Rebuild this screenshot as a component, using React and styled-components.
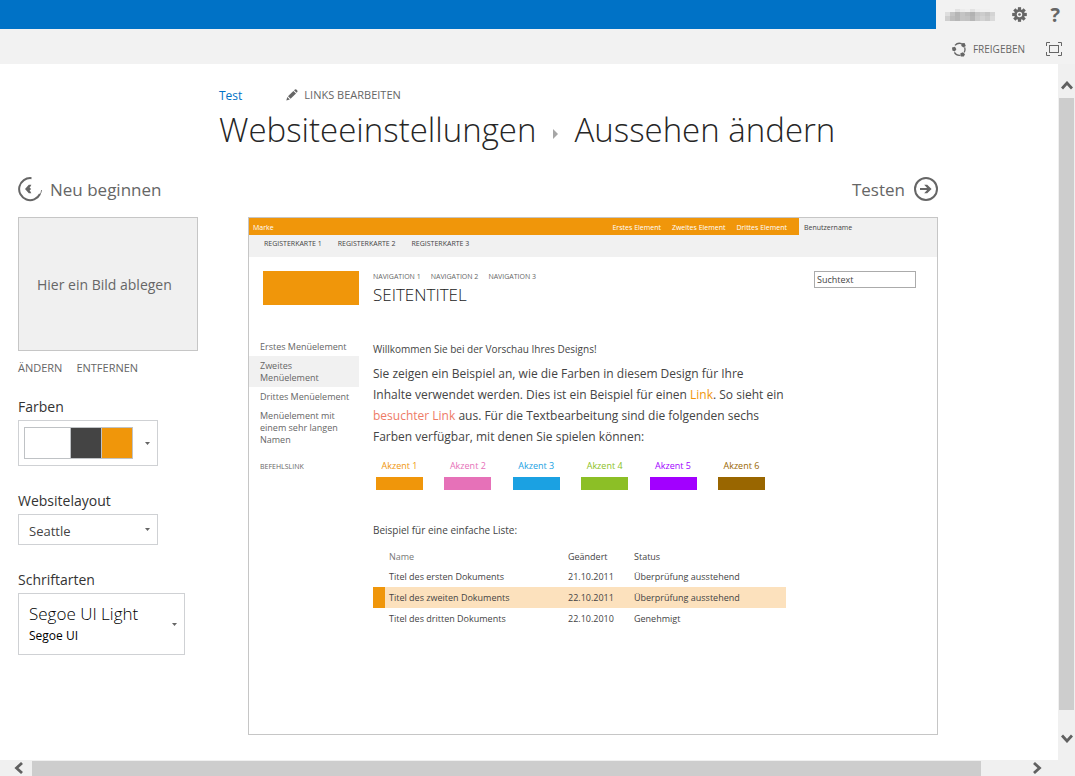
import React from "react";
import styled, { createGlobalStyle, css } from "styled-components";

const ORANGE = "#f0960a";
const GREY = "#666666";
const DARK = "#444444";
const LINE = "#c6c6c6";

const Global = createGlobalStyle`
  *, *::before, *::after { box-sizing: border-box; }
  body {
    margin: 0;
    background: #fff;
    color: ${DARK};
    font-family: "Open Sans", "Noto Sans", sans-serif;
    font-size: 12px;
  }
  button, input, select {
    font-family: inherit;
    color: inherit;
    margin: 0;
  }
  a { color: inherit; text-decoration: none; }
  h1, h2, p, ul { margin: 0; padding: 0; font-weight: 400; }
  ul { list-style: none; }
  svg { display: block; flex: none; }
`;

const Shell = styled.div`
  min-height: 100vh;
  display: flex;
  flex-direction: column;
`;

const SuiteBar = styled.header`
  display: flex;
  height: 29px;
  background: #0072c6;
`;

const SuiteTools = styled.div`
  margin-left: auto;
  width: 139px;
  background: #f2f2f2;
  display: flex;
  align-items: center;
  gap: 17px;
  padding: 0 15px 0 9px;

  > :last-child { margin-left: auto; }
`;

const PlainButton = styled.button`
  display: flex;
  align-items: center;
  gap: ${(p) => p.$gap || 0}px;
  padding: 0;
  border: 0;
  background: none;
  color: ${GREY};
  font-size: ${(p) => p.$size || 11}px;
  font-weight: ${(p) => p.$weight || 400};
  line-height: ${(p) => p.$line || 18}px;
  cursor: pointer;
`;

const Ribbon = styled.div`
  height: 35px;
  background: #f2f2f2;
  display: flex;
  justify-content: flex-end;
  align-items: center;
  gap: 21px;
  padding: 5px 13px 0 0;
`;

const Viewport = styled.div`
  flex: 1;
  display: flex;
`;

const Page = styled.main`
  flex: 1;
  min-width: 0;
  padding: 0 120px 25px 18px;
`;

const PageHead = styled.div`
  padding: 20px 0 0 201px;
  height: 113px;
`;

const TopLinks = styled.nav`
  display: flex;
  align-items: center;
  gap: 44px;
  height: 22px;
`;

const SiteLink = styled.a`
  color: #0072c6;
  font-size: 12px;
`;

const Title = styled.h1`
  display: flex;
  align-items: center;
  font-size: 33px;
  line-height: 48px;
  font-weight: 300;
  color: #262626;
  white-space: nowrap;
`;

const TitleArrow = styled.svg`
  margin: 8px 16px 0 17px;
`;

const Steps = styled.div`
  display: flex;
  justify-content: space-between;
  height: 40px;
`;

const Columns = styled.div`
  display: flex;
  gap: 50px;
  align-items: flex-start;
`;

const Options = styled.aside`
  width: 180px;
  flex: none;
`;

const DropZone = styled.div`
  height: 134px;
  border: 1px solid ${LINE};
  background: #f0f0f0;
  color: ${GREY};
  display: flex;
  align-items: center;
  padding-left: 18px;
  font-size: 14px;
`;

const DropActions = styled.div`
  display: flex;
  gap: 14px;
  margin: 8px 0 20px;
`;

const Field = styled.div`
  margin-bottom: 25px;
`;

const FieldLabel = styled.label`
  display: block;
  font-size: 14px;
  line-height: 20px;
  margin-bottom: 3px;
  color: #333;
`;

const pickerBox = css`
  width: ${(p) => p.$width}px;
  height: ${(p) => p.$height}px;
  border: 1px solid #cfd1d4;
  background: #fff;
`;

const Picker = styled.button`
  ${pickerBox}
  display: flex;
  align-items: center;
  justify-content: space-between;
  padding: 0 7px 0 ${(p) => p.$left}px;
  text-align: left;
`;

const SelectWrap = styled.div`
  display: grid;
  width: 140px;
  align-items: center;

  > * { grid-area: 1 / 1; }
  > svg { justify-self: end; margin-right: 8px; pointer-events: none; }
`;

const Select = styled.select`
  ${pickerBox}
  appearance: none;
  padding: 2px 20px 0 10px;
  font-size: 13px;
  color: ${DARK};
`;

const Swatches = styled.span`
  display: flex;
  gap: 1px;
  border: 1px solid #bfc2c5;
  background: #bfc2c5;
`;

const Swatch = styled.span`
  width: ${(p) => p.$width}px;
  height: 30px;
  background: ${(p) => p.$color};
`;

const FontSample = styled.span`
  display: block;
  color: #000;
  font-size: ${(p) => p.$size}px;
  font-weight: ${(p) => p.$weight};
  line-height: ${(p) => p.$line}px;
`;

const Preview = styled.section`
  flex: 1;
  min-width: 0;
  min-height: 518px;
  border: 1px solid ${LINE};
  font-size: 9px;
`;

const PvBrandBar = styled.div`
  display: flex;
  height: 17px;
  line-height: 19px;
  font-size: 7px;
  background: #f1f1f1;
`;

const PvBrand = styled.div`
  flex: 1;
  display: flex;
  gap: 11px;
  padding: 0 12px 0 4px;
  background: ${ORANGE};
  color: #fff;

  > :first-child { margin-right: auto; }
`;

const PvUser = styled.div`
  width: 138px;
  padding-left: 5px;
`;

const PvTabs = styled.div`
  display: flex;
  gap: 16px;
  height: 22px;
  padding-left: 15px;
  line-height: 18px;
  font-size: 7px;
  background: #f1f1f1;
`;

const PvHead = styled.div`
  display: flex;
  padding: 14px 21px 0 14px;
  height: 80px;
`;

const PvLogo = styled.div`
  width: 96px;
  height: 34px;
  margin-right: 14px;
  background: ${ORANGE};
`;

const PvNav = styled.nav`
  display: flex;
  gap: 10px;
  font-size: 7px;
  line-height: 12px;
  color: ${GREY};
`;

const PvTitle = styled.h2`
  font-size: 17px;
  font-weight: 300;
  line-height: 24px;
  color: #222;
`;

const PvSearch = styled.input`
  margin-left: auto;
  width: 102px;
  height: 17px;
  padding: 0 2px;
  border: 1px solid #ababab;
  font-size: 9px;
  color: ${DARK};
`;

const PvBody = styled.div`
  display: flex;
  gap: 14px;
`;

const PvSide = styled.ul`
  width: 110px;
  flex: none;
`;

const PvSideItem = styled.li`
  padding: 4px 8px 3px 11px;
  line-height: 12px;
  color: ${GREY};
  background: ${(p) => (p.$active ? "#f1f1f1" : "transparent")};
`;

const PvCommand = styled(PvSideItem)`
  margin-top: 8px;
  font-size: 7px;
`;

const PvContent = styled.div`
  width: 413px;
  padding-top: 3px;
`;

const PvText = styled.p`
  font-size: ${(p) => p.$size || 10}px;
  line-height: ${(p) => p.$line || 18}px;
`;

const PvSample = styled(PvText)`
  margin-top: 5px;
`;

const PvLink = styled.a`
  color: ${(p) => (p.$visited ? "#ee7b66" : ORANGE)};
`;

const Accents = styled.ul`
  display: flex;
  justify-content: space-between;
  padding: 11px 21px 31px 3px;
`;

const Accent = styled.li`
  width: 47px;
  text-align: center;
  line-height: 16px;
  color: ${(p) => p.$color};

  &::after {
    content: "";
    display: block;
    height: 13px;
    margin-top: 3px;
    background: ${(p) => p.$color};
  }
`;

const Docs = styled.table`
  width: 100%;
  margin-top: 8px;
  border-collapse: collapse;
  table-layout: fixed;
  font-size: 9px;

  th, td {
    height: 21px;
    padding: 0;
    text-align: left;
    font-weight: 400;
    line-height: 12px;
  }
  th { height: 19px; }
  th:nth-child(1) { width: 12px; }
  th:nth-child(2) { width: 183px; color: #777; }
  th:nth-child(3) { width: 66px; }
  th:nth-child(2), td:nth-child(2) { padding-left: 4px; }
`;

const DocRow = styled.tr`
  background: ${(p) => (p.$active ? "#fce1bd" : "transparent")};

  td:first-child { background: ${(p) => (p.$active ? ORANGE : "transparent")}; }
`;

const VTrack = styled.div`
  width: 17px;
  display: flex;
  flex-direction: column;
  align-items: center;
  justify-content: space-between;
  padding: 17px 0;
  background: #f0f0f0;
`;

const VThumb = styled.div`
  flex: 1;
  width: 15px;
  margin: 8px 0 24px;
  background: #cdcdcd;
`;

const HTrack = styled.div`
  display: flex;
  align-items: center;
  height: 16px;
  padding: 0 33px 0 14px;
  background: #f0f0f0;
`;

const HThumb = styled.div`
  flex: 1;
  height: 15px;
  margin: 1px 51px 0 8px;
  background: #cdcdcd;
`;

const Gear = () => (
  <svg width="15" height="15" viewBox="-8 -8 16 16" fill={GREY}>
    {[0, 45, 90, 135].map((a) => (
      <rect key={a} x="-1.7" y="-7.8" width="3.4" height="15.6" transform={`rotate(${a})`} />
    ))}
    <circle r="5.6" />
    <circle r="2.9" fill="#f2f2f2" />
    <circle r="1.4" />
  </svg>
);

const MASK_ROWS = [
  ["#f2f2f2", "#f2f2f2", "#e2e2e2", "#ececec", "#efefef", "#e2e2e2", "#eeeeee", "#f0f0f0", "#f0f0f0", "#f2f2f2"],
  ["#dedede", "#c4c4c4", "#b5b5b5", "#c4c4c4", "#bcbcbc", "#b2b2b2", "#c6c6c6", "#cccccc", "#c4c4c4", "#d4d4d4"],
  ["#cfcfcf", "#bdbdbd", "#b6b6b6", "#c4c4c4", "#c2c2c2", "#b6b6b6", "#cacaca", "#d2d2d2", "#cacaca", "#dadada"],
];
const MASK_TOPS = [0, 3, 7];

const MaskedName = () => (
  <svg width="50" height="12" viewBox="0 0 50 12" role="img" aria-label="Benutzer" shapeRendering="crispEdges">
    {MASK_ROWS.map((row, r) =>
      row.map((c, i) => <rect key={`${r}-${i}`} x={i * 5} y={MASK_TOPS[r]} width="5" height={r ? 5 - (r === 1) : 3} fill={c} />)
    )}
  </svg>
);

const ShareIcon = () => (
  <svg width="15" height="15" viewBox="0 0 15 15" fill="none" stroke={GREY} strokeWidth="1.3">
    <path d="M3 3.4A6 6 0 0 1 9.6 1.7M12.6 5.4A6 6 0 0 1 12.2 10.4M8.6 13.2A6 6 0 0 1 2.4 10.4" />
    <g fill={GREY} stroke="none">
      <path d="M0 5.6L3 4.8L4.4 7.2L2.8 9.4L0.4 8.6Z" />
      <path d="M9.2 1.2L12.6 1L13.8 4L11.4 5.4L9.4 4Z" />
      <path d="M8.4 11.2L11 10.2L13 12.2L11.8 14.6L8.8 14.4Z" />
    </g>
  </svg>
);

const FocusIcon = () => (
  <svg width="16" height="14" viewBox="0 0 16 14" fill="none" stroke={GREY}>
    <path d="M0.5 4V0.5H4M12 0.5H15.5V4M15.5 10V13.5H12M4 13.5H0.5V10" />
    <rect x="3.5" y="3.5" width="9" height="7" />
  </svg>
);

const Pencil = () => (
  <svg width="12" height="12" viewBox="0 0 12 12" fill={GREY}>
    <path d="M0.3 11.5L1.3 8L3.8 10.5Z" />
    <path d="M2 7.2L7.4 1.9L10 4.5L4.6 9.8Z" />
    <path d="M8 1.3L9 0.4Q9.7 0 10.3 0.6L11.3 1.6Q11.8 2.3 11.3 3L10.5 3.8Z" />
  </svg>
);

const BackIcon = () => (
  <svg width="25" height="25" viewBox="0 0 25 25" fill="none" stroke={GREY}>
    <path d="M13.5 1.2A11 11 0 1 0 22 17" strokeWidth="2" />
    <path d="M22 17.4Q23.4 15.4 23.6 13" strokeWidth="0.8" />
    <path d="M13.4 7.8L11 12L13.4 16.2H10.8L7 12L10.8 7.8Z" fill={GREY} stroke="none" />
    <path d="M8 12H12.6" strokeWidth="2" />
  </svg>
);

const ForwardIcon = () => (
  <svg width="24" height="25" viewBox="0 0 24 25" fill="none" stroke={GREY} strokeWidth="2">
    <circle cx="12" cy="12" r="11" />
    <path d="M6 12H16" />
    <path d="M10.2 7.8H13.2L17.6 12L13.2 16.2H10.2L14 12Z" fill={GREY} stroke="none" />
  </svg>
);

const Caret = () => (
  <svg width="5" height="3" viewBox="0 0 5 3" fill={GREY}>
    <path d="M0 0H5L2.5 3Z" />
  </svg>
);

const CHEVRONS = {
  up: ["0 0 12 9", "M1 7.5L6 2L11 7.5"],
  down: ["0 0 12 9", "M1 1.5L6 7L11 1.5"],
  left: ["0 0 10 12", "M8 1L2.5 6L8 11"],
  right: ["0 0 10 12", "M2 1L7.5 6L2 11"],
};

const Chevron = ({ dir }) => {
  const [box, d] = CHEVRONS[dir];
  const [, , w, h] = box.split(" ");
  return (
    <svg width={w} height={h} viewBox={box} fill="none" stroke="#606060" strokeWidth="2.8">
      <path d={d} />
    </svg>
  );
};

const ACCENTS = [ORANGE, "#e671b8", "#1ba1e2", "#8cbf26", "#a200ff", "#996600"];

const DOCS = [
  ["Titel des ersten Dokuments", "21.10.2011", "Überprüfung ausstehend"],
  ["Titel des zweiten Dokuments", "22.10.2011", "Überprüfung ausstehend"],
  ["Titel des dritten Dokuments", "22.10.2010", "Genehmigt"],
];

const DesignPreview = () => (
  <Preview>
    <PvBrandBar>
      <PvBrand>
        <span>Marke</span>
        <span>Erstes Element</span>
        <span>Zweites Element</span>
        <span>Drittes Element</span>
      </PvBrand>
      <PvUser>Benutzername</PvUser>
    </PvBrandBar>
    <PvTabs>
      <span>REGISTERKARTE 1</span>
      <span>REGISTERKARTE 2</span>
      <span>REGISTERKARTE 3</span>
    </PvTabs>
    <PvHead>
      <PvLogo />
      <div>
        <PvNav>
          <span>NAVIGATION 1</span>
          <span>NAVIGATION 2</span>
          <span>NAVIGATION 3</span>
        </PvNav>
        <PvTitle>SEITENTITEL</PvTitle>
      </div>
      <PvSearch type="text" aria-label="Suchtext" defaultValue="Suchtext" />
    </PvHead>
    <PvBody>
      <PvSide>
        <PvSideItem>Erstes Menüelement</PvSideItem>
        <PvSideItem $active>Zweites Menüelement</PvSideItem>
        <PvSideItem>Drittes Menüelement</PvSideItem>
        <PvSideItem>Menüelement mit einem sehr langen Namen</PvSideItem>
        <PvCommand>BEFEHLSLINK</PvCommand>
      </PvSide>
      <PvContent>
        <PvText>Willkommen Sie bei der Vorschau Ihres Designs!</PvText>
        <PvSample $size={12} $line={21}>
          Sie zeigen ein Beispiel an, wie die Farben in diesem Design für Ihre
          <br />
          Inhalte verwendet werden. Dies ist ein Beispiel für einen <PvLink href="#link">Link</PvLink>. So sieht ein
          <br />
          <PvLink href="#besucht" $visited>besuchter Link</PvLink> aus. Für die Textbearbeitung sind die folgenden sechs
          <br />
          Farben verfügbar, mit denen Sie spielen können:
        </PvSample>
        <Accents>
          {ACCENTS.map((c, i) => (
            <Accent key={c} $color={c}>Akzent {i + 1}</Accent>
          ))}
        </Accents>
        <PvText>Beispiel für eine einfache Liste:</PvText>
        <Docs>
          <thead>
            <tr>
              <th />
              <th>Name</th>
              <th>Geändert</th>
              <th>Status</th>
            </tr>
          </thead>
          <tbody>
            {DOCS.map(([name, date, status], i) => (
              <DocRow key={name} $active={i === 1}>
                <td />
                <td>{name}</td>
                <td>{date}</td>
                <td>{status}</td>
              </DocRow>
            ))}
          </tbody>
        </Docs>
      </PvContent>
    </PvBody>
  </Preview>
);

export default function App() {
  return (
    <Shell>
      <Global />
      <SuiteBar>
        <SuiteTools>
          <MaskedName />
          <PlainButton aria-label="Einstellungen"><Gear /></PlainButton>
          <PlainButton $size={20} $weight={700}>?</PlainButton>
        </SuiteTools>
      </SuiteBar>
      <Ribbon>
        <PlainButton $gap={6} $size={10}><ShareIcon />FREIGEBEN</PlainButton>
        <PlainButton aria-label="Fokus auf Inhalt"><FocusIcon /></PlainButton>
      </Ribbon>
      <Viewport>
        <Page>
          <PageHead>
            <TopLinks>
              <SiteLink href="#test">Test</SiteLink>
              <PlainButton $gap={6}><Pencil />LINKS BEARBEITEN</PlainButton>
            </TopLinks>
            <Title>
              Websiteeinstellungen
              <TitleArrow width="5" height="10" viewBox="0 0 5 10" fill="#a6a6a6">
                <path d="M0 0L5 5L0 10Z" />
              </TitleArrow>
              Aussehen ändern
            </Title>
          </PageHead>
          <Steps>
            <div>
              <PlainButton $gap={7} $size={17} $line={25}><BackIcon />Neu beginnen</PlainButton>
            </div>
            <div>
              <PlainButton $gap={9} $size={17} $line={25}>Testen<ForwardIcon /></PlainButton>
            </div>
          </Steps>
          <Columns>
            <Options>
              <DropZone>Hier ein Bild ablegen</DropZone>
              <DropActions>
                <PlainButton>ÄNDERN</PlainButton>
                <PlainButton>ENTFERNEN</PlainButton>
              </DropActions>
              <Field>
                <FieldLabel htmlFor="colors">Farben</FieldLabel>
                <Picker id="colors" aria-haspopup="listbox" $width={140} $height={46} $left={5}>
                  <Swatches>
                    <Swatch $width={45} $color="#ffffff" />
                    <Swatch $width={30} $color="#444444" />
                    <Swatch $width={30} $color={ORANGE} />
                  </Swatches>
                  <Caret />
                </Picker>
              </Field>
              <Field>
                <FieldLabel htmlFor="layout">Websitelayout</FieldLabel>
                <SelectWrap>
                  <Select id="layout" defaultValue="Seattle" $width={140} $height={31}>
                    <option>Seattle</option>
                    <option>Oslo</option>
                  </Select>
                  <Caret />
                </SelectWrap>
              </Field>
              <Field>
                <FieldLabel htmlFor="fonts">Schriftarten</FieldLabel>
                <Picker id="fonts" aria-haspopup="listbox" $width={167} $height={62} $left={10}>
                  <span>
                    <FontSample $size={17} $weight={300} $line={24}>Segoe UI Light</FontSample>
                    <FontSample $size={12} $weight={400} $line={20}>Segoe UI</FontSample>
                  </span>
                  <Caret />
                </Picker>
              </Field>
            </Options>
            <DesignPreview />
          </Columns>
        </Page>
        <VTrack>
          <Chevron dir="up" />
          <VThumb />
          <Chevron dir="down" />
        </VTrack>
      </Viewport>
      <HTrack>
        <Chevron dir="left" />
        <HThumb />
        <Chevron dir="right" />
      </HTrack>
    </Shell>
  );
}
